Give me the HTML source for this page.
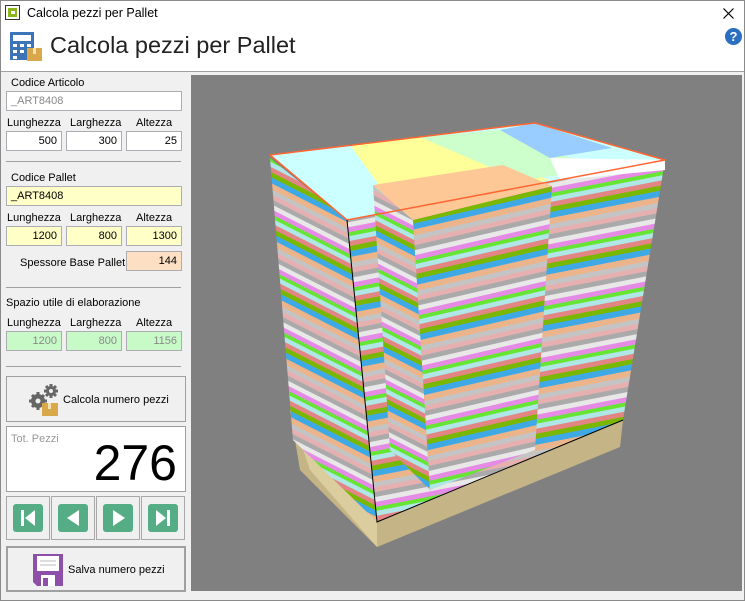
<!DOCTYPE html>
<html><head><meta charset="utf-8"><style>
*{box-sizing:border-box;margin:0;padding:0}
body{width:745px;height:601px;position:relative;background:#f0f0f0;font-family:"Liberation Sans",sans-serif;font-size:11px;color:#000;overflow:hidden}
.a{position:absolute}
.inp{position:absolute;height:20px;border:1px solid #abadb3;background:#fff;text-align:right;padding:3px 4px 0 0;font-size:11px}
.y{background:#ffffc8}
.g{background:#c8fac8;color:#888}
.hr{position:absolute;left:6px;width:175px;height:1px;background:#a0a0a0}
.btn{position:absolute;border:1px solid #a0a0a0;background:#f0f0f0}
.nav{position:absolute;top:496px;height:44px;border:1px solid #a8a8a8;background:#f0f0f0}
.nav svg{position:absolute;left:6px;top:7px}
</style></head><body>
<div class="a" style="left:0;top:0;width:745px;height:601px;border:1px solid #8a8a8a"></div>
<div class="a" style="left:1px;top:1px;width:743px;height:70px;background:#fff"></div>
<div class="a" style="left:5px;top:5px;width:15px;height:15px;border:1px solid #333;background:#fff"><div style="position:absolute;left:2px;top:2px;width:9px;height:9px;border:3px solid #8ab61a;border-right-width:2px"></div></div>
<div class="a" style="left:27px;top:6px;font-size:12.5px">Calcola pezzi per Pallet</div>
<svg class="a" style="left:723px;top:8px" width="11" height="11"><path d="M0.5 0.5l10 10M10.5 0.5l-10 10" stroke="#000" stroke-width="1.2"/></svg>
<svg class="a" style="left:9px;top:31px" width="36" height="32"><rect x="1" y="1" width="24" height="28" fill="#3d74b8"/><rect x="4" y="4" width="18" height="6" fill="#fff"/><g fill="#fff"><rect x="4" y="13" width="4" height="3"/><rect x="11" y="13" width="4" height="3"/><rect x="18" y="13" width="4" height="3"/><rect x="4" y="19" width="4" height="3"/><rect x="11" y="19" width="4" height="3"/><rect x="4" y="25" width="4" height="3"/></g><rect x="18" y="17" width="15" height="13" fill="#d9a84a"/><rect x="24" y="17" width="3" height="6" fill="#f3e2b2"/></svg>
<div class="a" style="left:50px;top:32px;font-size:23.5px;color:#222">Calcola pezzi per Pallet</div>
<div class="a" style="left:725px;top:28px;width:17px;height:17px;border-radius:50%;background:#2a6fc0;color:#fff;font-weight:bold;font-size:13px;text-align:center;line-height:17px">?</div>
<div class="a" style="left:1px;top:71px;width:743px;height:1px;background:#a0a0a0"></div>

<div class="a" style="left:11px;top:77px">Codice Articolo</div>
<div class="inp" style="left:6px;top:91px;width:176px;text-align:left;padding-left:4px;color:#888">_ART8408</div>
<div class="a" style="left:7px;top:117px">Lunghezza</div><div class="a" style="left:70px;top:117px">Larghezza</div><div class="a" style="left:136px;top:117px">Altezza</div>
<div class="inp" style="left:6px;top:131px;width:56px">500</div><div class="inp" style="left:66px;top:131px;width:56px">300</div><div class="inp" style="left:126px;top:131px;width:56px">25</div>
<div class="hr" style="top:161px"></div>
<div class="a" style="left:11px;top:172px">Codice Pallet</div>
<div class="inp y" style="left:6px;top:186px;width:176px;text-align:left;padding-left:4px">_ART8408</div>
<div class="a" style="left:7px;top:212px">Lunghezza</div><div class="a" style="left:70px;top:212px">Larghezza</div><div class="a" style="left:136px;top:212px">Altezza</div>
<div class="inp y" style="left:6px;top:226px;width:56px">1200</div><div class="inp y" style="left:66px;top:226px;width:56px">800</div><div class="inp y" style="left:126px;top:226px;width:56px">1300</div>
<div class="a" style="left:20px;top:257px">Spessore Base Pallet</div>
<div class="inp" style="left:126px;top:251px;width:56px;background:#fde0c4">144</div>
<div class="hr" style="top:287px"></div>
<div class="a" style="left:6px;top:297px">Spazio utile di elaborazione</div>
<div class="a" style="left:7px;top:317px">Lunghezza</div><div class="a" style="left:70px;top:317px">Larghezza</div><div class="a" style="left:136px;top:317px">Altezza</div>
<div class="inp g" style="left:6px;top:331px;width:56px">1200</div><div class="inp g" style="left:66px;top:331px;width:56px">800</div><div class="inp g" style="left:126px;top:331px;width:56px">1156</div>
<div class="hr" style="top:366px"></div>

<div class="btn" style="left:6px;top:376px;width:180px;height:46px">
<svg class="a" style="left:20px;top:6px" width="34" height="34"><g fill="#666"><circle cx="11" cy="18" r="7"/><circle cx="24" cy="8" r="5"/></g><g stroke="#666" stroke-width="3"><path d="M11 9v18M2 18h18M5 12l12 12M17 12L5 24M24 1v14M17 8h14M19 3l10 10M29 3L19 13"/></g><circle cx="11" cy="18" r="2.5" fill="#f0f0f0"/><circle cx="24" cy="8" r="2" fill="#f0f0f0"/><rect x="15" y="20" width="16" height="13" fill="#d9a84a"/><rect x="21" y="20" width="3" height="6" fill="#f3e2b2"/></svg>
<div class="a" style="left:56px;top:17px">Calcola numero pezzi</div></div>
<div class="a" style="left:6px;top:426px;width:180px;height:66px;border:1px solid #a0a0a0;background:#fff">
<div class="a" style="left:4px;top:6px;color:#999">Tot. Pezzi</div>
<div class="a" style="right:8px;top:6px;font-size:50px;line-height:60px">276</div></div>
<div class="nav" style="left:6px;width:44px"><svg width="30" height="28"><rect width="30" height="28" rx="3" fill="#55ad85"/><path d="M8 6h3v16H8zM22 6v16L12 14z" fill="#fff"/></svg></div>
<div class="nav" style="left:51px;width:44px"><svg width="30" height="28"><rect width="30" height="28" rx="3" fill="#55ad85"/><path d="M21 6v16L9 14z" fill="#fff"/></svg></div>
<div class="nav" style="left:96px;width:44px"><svg width="30" height="28"><rect width="30" height="28" rx="3" fill="#55ad85"/><path d="M10 6v16l12-8z" fill="#fff"/></svg></div>
<div class="nav" style="left:141px;width:44px"><svg width="30" height="28"><rect width="30" height="28" rx="3" fill="#55ad85"/><path d="M8 6v16l10-8zM19 6h3v16h-3z" fill="#fff"/></svg></div>
<div class="btn" style="left:6px;top:546px;width:180px;height:46px;border:2px solid #a0a0a0">
<svg class="a" style="left:25px;top:6px" width="30" height="32"><path d="M0 0h30v32H4l-4-4z" fill="#8e4fa8"/><rect x="4" y="2" width="22" height="15" fill="#fff"/><g stroke="#bbb"><path d="M7 7h16M7 11h16"/></g><rect x="8" y="21" width="14" height="11" fill="#fff"/><rect x="10" y="24" width="5" height="8" fill="#8e4fa8"/></svg>
<div class="a" style="left:60px;top:16px">Salva numero pezzi</div></div>

<svg class="a" style="left:191px;top:75px" width="551" height="516" viewBox="191 75 551 516">
<defs>
<pattern id="s" width="40" height="56" patternUnits="userSpaceOnUse"><rect width="40" height="56" fill="#e6b0b0"/><rect y="5" width="40" height="5" fill="#aaaaaa"/><rect y="10" width="40" height="5" fill="#e8e8e8"/><rect y="15" width="40" height="5" fill="#e58ae5"/><rect y="20" width="40" height="4" fill="#66e633"/><rect y="24" width="40" height="5" fill="#b0e6e6"/><rect y="29" width="40" height="5" fill="#e38585"/><rect y="34" width="40" height="5" fill="#7ab800"/><rect y="39" width="40" height="6" fill="#3fa9e5"/><rect y="45" width="40" height="6" fill="#ebb48a"/><rect y="51" width="40" height="5" fill="#c4c4c4"/></pattern>
<pattern id="L" href="#s" patternTransform="skewY(27)"/>
<pattern id="F" href="#s" patternTransform="skewY(-13)"/>
<pattern id="R" href="#s" patternTransform="skewY(-11)"/>
</defs>
<rect x="191" y="75" width="551" height="516" fill="#808080"/>
<polygon points="290,410 377,522 623,420 620,447 377,547 300,470" fill="#c4b486"/>
<polygon points="290,410 377,522 377,547 310,470" fill="#dccd9e"/>
<polygon points="270,158 347,220 377,522 293,440" fill="url(#L)"/>
<polygon points="347,220 665,160 623,420 377,522" fill="url(#R)"/>
<polygon points="270,155 535,123 665,160 347,220" fill="#ccffff"/>
<polygon points="350,145 420,137 550,180 390,200" fill="#ffff99"/>
<polygon points="420,137 500,130 600,170 520,180" fill="#ccffcc"/>
<polygon points="500,130 535,123 612,148 550,158" fill="#99ccff"/>
<polygon points="550,158 665,160 665,170 560,180" fill="#ffffff"/>
<polygon points="373,185 413,220 430,490 390,450" fill="url(#L)"/>
<polygon points="413,220 552,186 535,450 430,490" fill="url(#F)"/>
<polygon points="373,185 503,165 552,186 413,220" fill="#fdc896"/>
<polyline points="270,155 535,123 665,160 347,220 270,155" fill="none" stroke="#ff6633" stroke-width="1.5"/>
<polyline points="347,220 377,522 623,420" fill="none" stroke="#000" stroke-width="1"/>
</svg>
</body></html>
